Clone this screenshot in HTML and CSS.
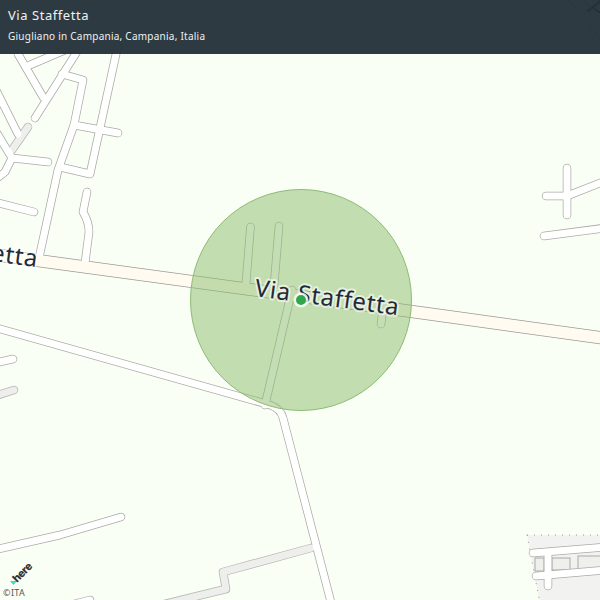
FILE: index.html
```html
<!DOCTYPE html>
<html lang="it">
<head>
<meta charset="utf-8">
<title>Via Staffetta</title>
<link rel="stylesheet" href="styles.css">
</head>
<body>
<main class="map">
  <svg class="canvas" width="600" height="600" viewBox="0 0 600 600" xmlns="http://www.w3.org/2000/svg">
    <defs>
      <g id="minor">
        <path d="M118 45L90 174L60 167"/>
        <path d="M62 74L83 80L74 125L118 133"/>
        <path d="M74 125L58 170L39 258"/>
        <path d="M18 54L43 97"/>
        <path d="M80 47L35 118"/>
        <path d="M30 65L72 47"/>
        <path d="M-5 88L18 134"/>
        <path d="M-5 130L12 158L5 172L-8 182"/>
        <path d="M12 158L48 162"/>
        <path d="M-5 202L34 212"/>
        <path d="M87 192L83 212Q89 222 89 232L85 263"/>
        <path d="M-5 363L13 359"/>
        <path d="M250.500 227L246 283"/>
        <path d="M279 226L274 286"/>
        <path d="M292 290L265 405"/>
        <path d="M383 308L381 324"/>
        <path d="M-10 326L270 405Q281 409 283 418L333 610"/>
        <path d="M-10 551L60 535L121 517"/>
        <path d="M567 168V215"/>
        <path d="M546 196H567L605 181"/>
        <path d="M544 236L605 228"/>
        <path d="M533 553L605 547"/>
        <path d="M536 576L605 570"/>
        <path d="M548 553V586"/>
        <path d="M74 604L90 600"/>
      </g>
      <g id="service">
        <path d="M28 127L12 150"/>
        <path d="M-5 396L14 390"/>
        <path d="M311 548L223 572L226 589L165 604"/>
      </g>
    </defs>
    <rect class="ground" width="600" height="600"/>
    <path class="block" d="M527 535H600V600H539Z"/>
    <path class="block-dots" d="M527 535H600M527 535L539 598"/>
    <rect class="lot" x="535" y="558" width="9" height="13"/>
    <rect class="lot" x="552" y="558" width="18" height="12"/>
    <rect class="lot" x="578" y="556" width="24" height="13"/>
    <path class="casing-main" d="M-10 254L430 314L610 339"/>
    <path class="casing-main" d="M570 -8L612 44"/>
    <use href="#service" class="casing-service"/>
    <use href="#minor" class="casing-minor"/>
    <use href="#service" class="fill-service"/>
    <use href="#minor" class="fill-minor"/>
    <path class="fill-main" d="M-10 254L430 314L610 339"/>
    <path class="fill-main" d="M570 -8L612 44"/>
    <circle class="radius" cx="301" cy="300" r="110.500"/>
    <text class="label" transform="translate(254 296) rotate(7.600)">Via Staffetta</text>
    <text class="label" text-anchor="end" transform="translate(37 267) rotate(7.600)">etta</text>
    <text class="label" transform="translate(572 -8) rotate(52)">a P</text>
    <circle class="halo" cx="301" cy="300" r="7.500"/>
    <circle class="dot" cx="301" cy="300" r="5"/>
    <path class="here-mark" d="M10 581L17 581L13.500 585Z"/>
    <text class="here" transform="translate(17 583) rotate(-45)">here</text>
    <text class="copy" x="3" y="596">©ITA</text>
  </svg>
  <header class="bar">
    <h1 class="title">Via Staffetta</h1>
    <p class="place">Giugliano in Campania, Campania, Italia</p>
  </header>
</main>
</body>
</html>
```

FILE: styles.css
```css
html, body {
  margin: 0;
  padding: 0;
  background: #fafff6;
}

.map {
  position: relative;
  width: 600px;
  height: 600px;
  overflow: hidden;
  font-family: "Noto Sans", sans-serif;
}

.canvas {
  display: block;
}

.bar {
  position: absolute;
  top: 0;
  left: 0;
  right: 0;
  height: 54px;
  box-sizing: border-box;
  padding: 6px 8px 0;
  display: flex;
  flex-direction: column;
  gap: 5px;
  background: rgba(36, 50, 58, 0.96);
  color: #eef2f3;
}

.title {
  margin: 0;
  font-size: 13px;
  line-height: 18px;
  font-weight: 400;
  letter-spacing: 0.55px;
}

.place {
  margin: 0;
  font-size: 10px;
  line-height: 14px;
  letter-spacing: 0.24px;
}

.ground {
  fill: #fafff6;
}

.block {
  fill: #f2f2f0;
}

.block-dots {
  fill: none;
  stroke: #999;
  stroke-width: 1;
  stroke-dasharray: 1 6;
}

.lot {
  fill: #efefec;
  stroke: #aaa;
  stroke-width: 1;
}

.casing-minor,
.fill-minor,
.casing-service,
.fill-service {
  fill: none;
  stroke-linecap: round;
  stroke-linejoin: round;
}

.casing-minor {
  stroke: #aaaaa7;
  stroke-width: 8.500;
}

.fill-minor {
  stroke: #ffffff;
  stroke-width: 7;
}

.casing-service {
  stroke: #b5b5b2;
  stroke-width: 8.500;
}

.fill-service {
  stroke: #eeeeec;
  stroke-width: 7;
}

.casing-main {
  fill: none;
  stroke: #9b9a94;
  stroke-width: 13;
}

.fill-main {
  fill: none;
  stroke: #fffbf0;
  stroke-width: 11.500;
}

.radius {
  fill: rgba(138, 188, 106, 0.5);
  stroke: #8fbb75;
  stroke-width: 1;
}

.label {
  font-size: 24px;
  letter-spacing: 0.7px;
  fill: #1f2a3a;
  stroke: rgba(255, 255, 255, 0.6);
  stroke-width: 4px;
  paint-order: stroke;
  stroke-linejoin: round;
}

.halo {
  fill: rgba(255, 255, 255, 0.8);
}

.dot {
  fill: #2ea84a;
}

.here {
  font-family: "Inter", sans-serif;
  font-size: 11px;
  font-weight: 800;
  letter-spacing: -0.6px;
  fill: #30343a;
}

.here-mark {
  fill: #48d5bb;
}

.copy {
  font-size: 9px;
  letter-spacing: 0.4px;
  fill: #555;
}
```
